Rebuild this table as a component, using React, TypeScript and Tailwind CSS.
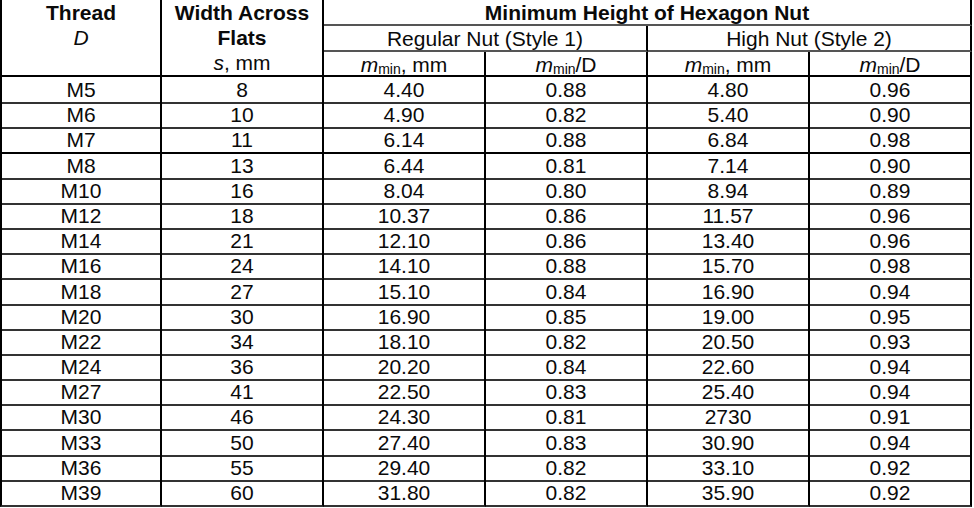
const ROWS: string[][] = [
  ['M5', '8', '4.40', '0.88', '4.80', '0.96'],
  ['M6', '10', '4.90', '0.82', '5.40', '0.90'],
  ['M7', '11', '6.14', '0.88', '6.84', '0.98'],
  ['M8', '13', '6.44', '0.81', '7.14', '0.90'],
  ['M10', '16', '8.04', '0.80', '8.94', '0.89'],
  ['M12', '18', '10.37', '0.86', '11.57', '0.96'],
  ['M14', '21', '12.10', '0.86', '13.40', '0.96'],
  ['M16', '24', '14.10', '0.88', '15.70', '0.98'],
  ['M18', '27', '15.10', '0.84', '16.90', '0.94'],
  ['M20', '30', '16.90', '0.85', '19.00', '0.95'],
  ['M22', '34', '18.10', '0.82', '20.50', '0.93'],
  ['M24', '36', '20.20', '0.84', '22.60', '0.94'],
  ['M27', '41', '22.50', '0.83', '25.40', '0.94'],
  ['M30', '46', '24.30', '0.81', '2730', '0.91'],
  ['M33', '50', '27.40', '0.83', '30.90', '0.94'],
  ['M36', '55', '29.40', '0.82', '33.10', '0.92'],
  ['M39', '60', '31.80', '0.82', '35.90', '0.92'],
]

function MMin({ suffix }: { suffix: string }) {
  return (
    <span>
      <i>m</i>
      <span className="text-[14px] align-[-2px]">min</span>
      {suffix}
    </span>
  )
}

export default function App() {
  return (
    <div className="w-[974px] h-[508px] bg-white text-[#0a0a0a] text-[21px] leading-[25px] font-['Liberation_Sans',Arial,sans-serif]">
      <div className="w-[972px]">
        {/* Header */}
        <div className="grid grid-cols-[162px_162px_162px_162px_162px_162px] grid-rows-[26px_26px_25px]">
          <div className="row-span-3 flex flex-col items-center border-l-2 border-r-2 border-b-2 border-black">
            <span className="font-bold">Thread</span>
            <i>D</i>
          </div>
          <div className="row-span-3 flex flex-col items-center border-r-2 border-b-2 border-black">
            <span className="font-bold">Width Across</span>
            <span className="font-bold">Flats</span>
            <span>
              <i>s</i>, mm
            </span>
          </div>
          <div className="col-span-4 flex items-start justify-center font-bold border-r-2 border-r-black border-b-2 border-b-[#555]">
            Minimum Height of Hexagon Nut
          </div>
          <div className="col-span-2 flex items-start justify-center border-r-2 border-r-black border-b-2 border-b-[#555]">
            Regular Nut (Style 1)
          </div>
          <div className="col-span-2 flex items-start justify-center border-r-2 border-r-black border-b-2 border-b-[#555]">
            High Nut (Style 2)
          </div>
          <div className="flex items-start justify-center border-r-2 border-b-2 border-black">
            <MMin suffix=", mm" />
          </div>
          <div className="flex items-start justify-center border-r-2 border-b-2 border-black">
            <MMin suffix="/D" />
          </div>
          <div className="flex items-start justify-center border-r-2 border-b-2 border-black">
            <MMin suffix=", mm" />
          </div>
          <div className="flex items-start justify-center border-r-2 border-b-2 border-black">
            <MMin suffix="/D" />
          </div>
        </div>

        {/* Body */}
        {ROWS.map((row, i) => (
          <div key={row[0]} className="grid grid-cols-[162px_162px_162px_162px_162px_162px] h-[25.2px]">
            {row.map((v, j) => (
              <div
                key={j}
                className={`flex items-center justify-center border-r-2 border-r-black border-b-2 ${
                  i === 2 ? 'border-b-black' : 'border-b-[#333]'
                } ${j === 0 ? 'border-l-2 border-l-black' : ''}`}
              >
                {v}
              </div>
            ))}
          </div>
        ))}
      </div>
    </div>
  )
}
